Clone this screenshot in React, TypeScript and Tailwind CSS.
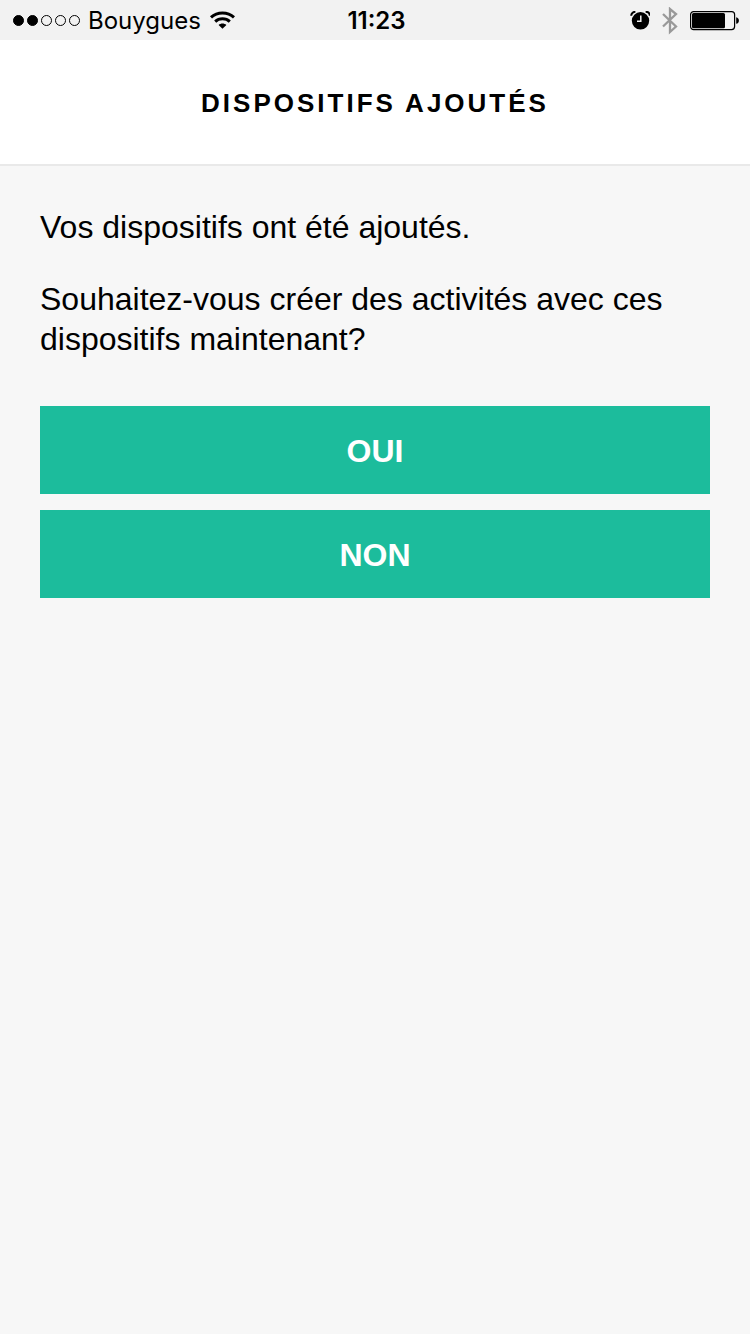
import type { ReactNode } from 'react';

const signal = [true, true, false, false, false];

function WifiIcon() {
  return (
    <svg viewBox="0 0 26 20" className="h-5 w-[26px]" fill="none" stroke="#000" strokeWidth="3" aria-hidden="true">
      <path d="M2 6.400C8.300.6 18.700.6 25 6.400" />
      <path d="M6.200 10.600c4-3.700 10.600-3.700 14.600 0" />
      <path d="M13.500 17.800l-3.900-3.900c2.100-2 5.700-2 7.800 0z" fill="#000" stroke="none" />
    </svg>
  );
}

function AlarmIcon() {
  return (
    <svg viewBox="0 0 20 20" className="size-5" aria-hidden="true">
      <circle cx="10.500" cy="9.800" r="8.700" />
      <path d="M1.200 4.800C1.200 2.400 3 .8 5.400.8M19.800 4.800c0-2.400-1.800-4-4.200-4" fill="none" stroke="#000" strokeWidth="2" />
      <path d="M10.800 4.500v5.800H7" fill="none" stroke="#f2f2f2" strokeWidth="1.500" />
    </svg>
  );
}

function BluetoothIcon() {
  return (
    <svg viewBox="0 0 16 28" className="h-7 w-4" fill="none" stroke="#999" strokeWidth="2.300" aria-hidden="true">
      <path d="M1 7l13 12.500L8 25V2l6 5L1 19.500" />
    </svg>
  );
}

function BatteryIcon() {
  return (
    <svg viewBox="0 0 50 20" className="h-5 w-[50px]" aria-hidden="true">
      <rect x="0.600" y="0.600" width="44" height="18" rx="3" fill="none" stroke="#000" strokeWidth="1.200" />
      <rect x="2" y="2" width="33" height="15.200" rx="1.500" />
      <path d="M46.200 6.200c3.600.6 3.600 6 0 6.600z" />
    </svg>
  );
}

function StatusBar() {
  return (
    <div className="grid h-10 grid-cols-[1fr_auto_1fr] items-center bg-[#f2f2f2] pt-px pr-[10px] pl-[13px] font-['Inter',sans-serif] text-2xl">
      <div className="flex items-center gap-2">
        <div className="flex gap-[3px]">
          {signal.map((filled, i) => (
            <span key={i} className={`size-[11px] rounded-full border border-black ${filled ? 'bg-black' : ''}`} />
          ))}
        </div>
        <span>Bouygues</span>
        <WifiIcon />
      </div>
      <span className="font-semibold">11:23</span>
      <div className="flex items-center justify-end gap-3">
        <AlarmIcon />
        <BluetoothIcon />
        <BatteryIcon />
      </div>
    </div>
  );
}

function ActionButton({ children }: { children: ReactNode }) {
  return (
    <button type="button" className="h-[88px] w-full bg-[#1cbc9c] pt-px text-[32px] font-bold text-white">
      {children}
    </button>
  );
}

export default function App() {
  return (
    <div className="min-h-screen bg-[#f7f7f7] font-['Liberation_Sans',sans-serif] text-black">
      <StatusBar />
      <header className="flex h-[126px] items-center justify-center border-b-2 border-[#e9e9e9] bg-white pt-0.5">
        <h1 className="text-[26px] font-bold tracking-[3px]">DISPOSITIFS AJOUTÉS</h1>
      </header>
      <main className="px-10 pt-[41px]">
        <p className="text-[32px] leading-10">Vos dispositifs ont été ajoutés.</p>
        <p className="mt-8 text-[32px] leading-10">
          Souhaitez-vous créer des activités avec ces dispositifs maintenant?
        </p>
        <div className="mt-[47px] flex flex-col gap-4">
          <ActionButton>OUI</ActionButton>
          <ActionButton>NON</ActionButton>
        </div>
      </main>
    </div>
  );
}
